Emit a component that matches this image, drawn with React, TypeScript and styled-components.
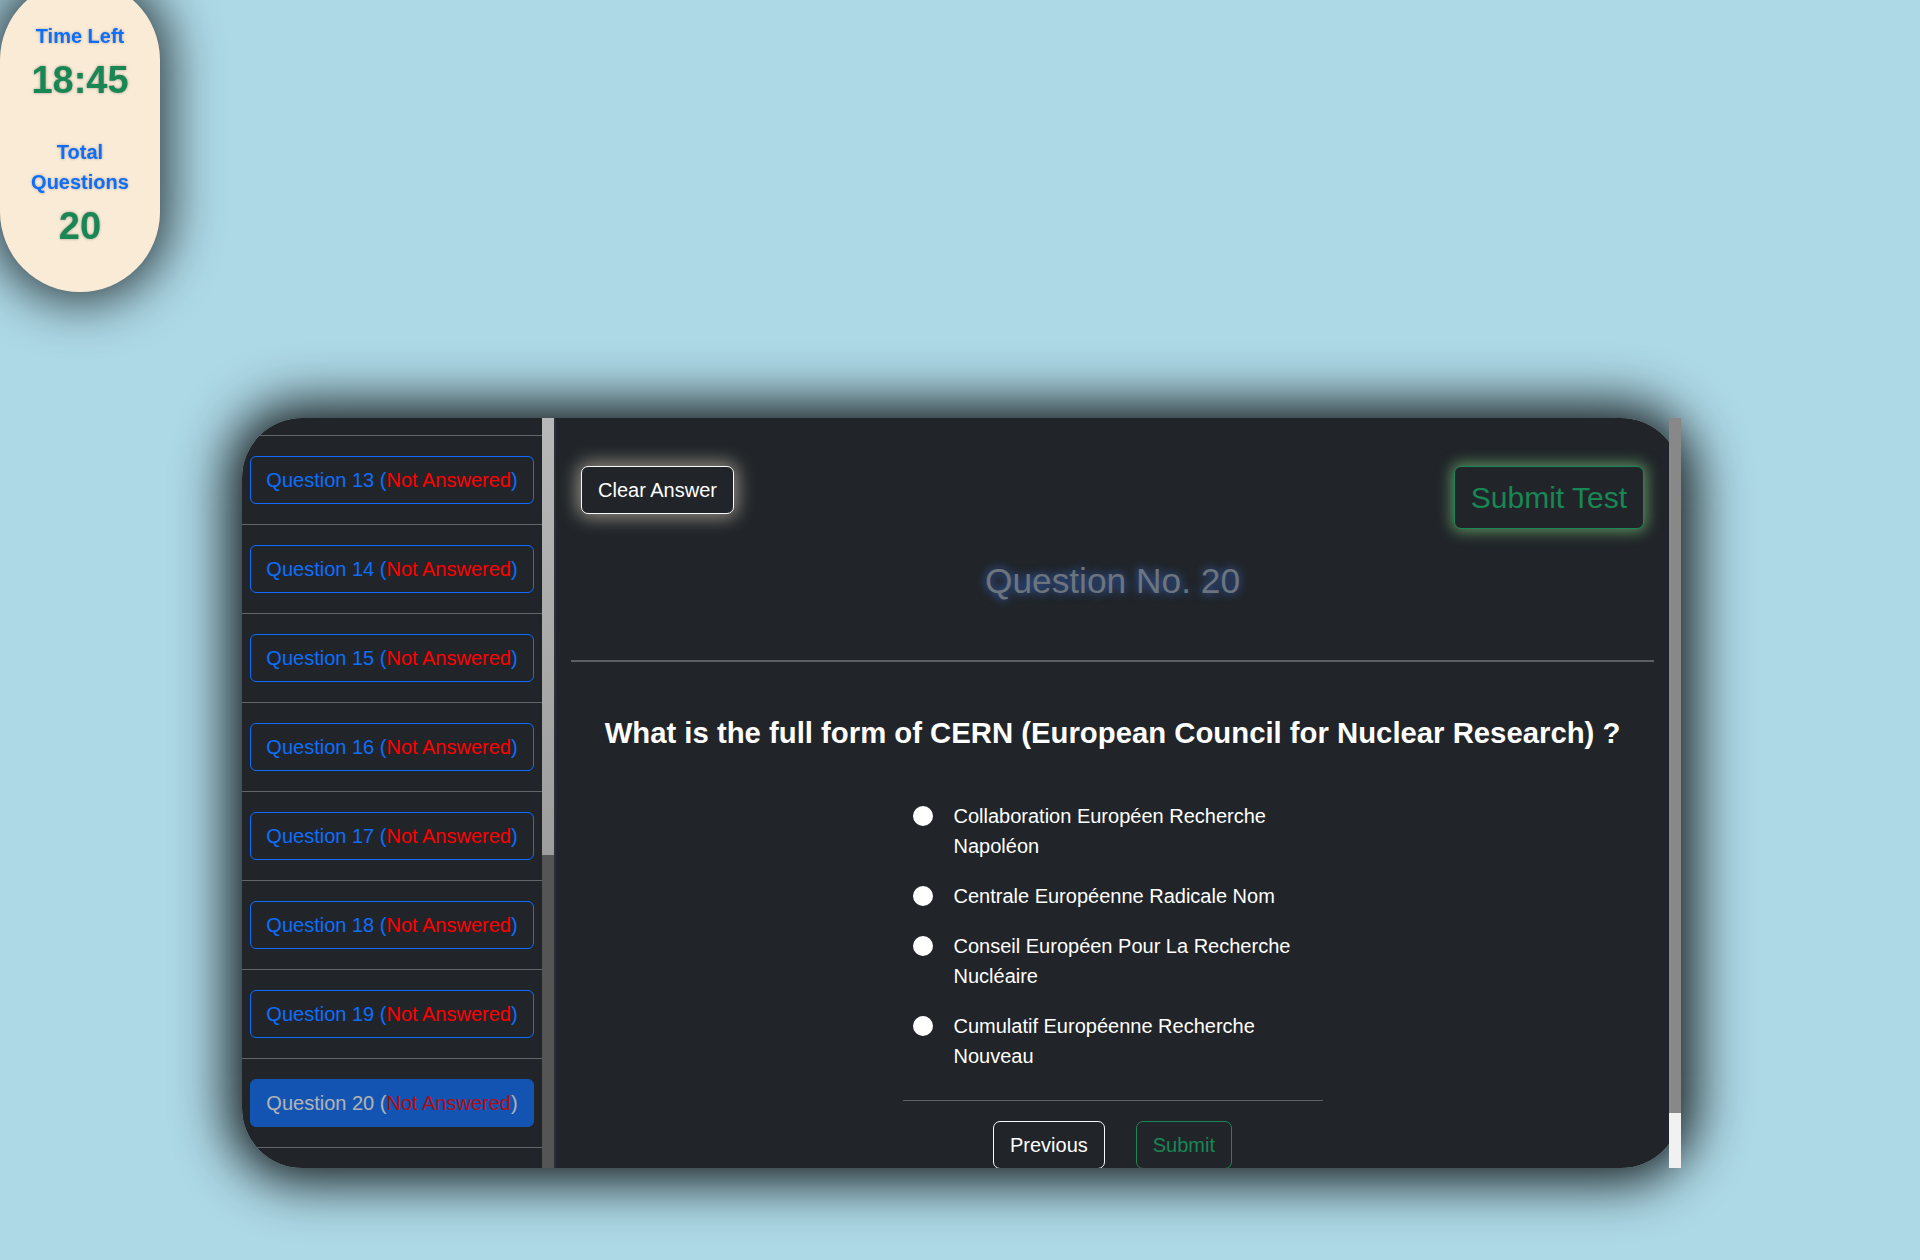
import React, { useLayoutEffect, useRef } from "react";
import styled, { createGlobalStyle } from "styled-components";

const FONT = `"Liberation Sans", Arial, sans-serif`;

const GlobalStyle = createGlobalStyle`
  html, body { margin: 0; padding: 0; }
  body {
    background: #add8e6;
    font-family: ${FONT};
    min-height: 100vh;
  }
  * { box-sizing: border-box; }
`;

const Page = styled.div`
  padding: 418px 0 0 3px;
  min-height: 1260px;
`;

const TimerCard = styled.aside`
  position: fixed;
  top: -20px;
  left: 0;
  width: 160px;
  height: 312px;
  border-radius: 80px;
  background: #faebd7;
  box-shadow: 0 0 50px 10px rgba(0, 0, 0, 0.72);
  display: flex;
  flex-direction: column;
  align-items: center;
  padding: 41px 20px 0;
  text-align: center;
  z-index: 2;
`;

const TimerLabel = styled.div<{ $gap?: number }>`
  color: #0d6efd;
  font-weight: 700;
  font-size: 20px;
  line-height: 30px;
  margin-top: ${(p) => p.$gap ?? 0}px;
  text-shadow: 0 0 3px rgba(0, 0, 0, 0.3);
`;

const TimerValue = styled.div`
  color: #198754;
  font-weight: 700;
  font-size: 38px;
  line-height: 45.6px;
  margin-top: 7px;
  text-shadow: 0 0 3px rgba(0, 0, 0, 0.35);
`;

const Panel = styled.main`
  width: 1439px;
  height: 750px;
  margin: 0 auto;
  display: flex;
  border-radius: 60px;
  box-shadow: 0 0 52px 14px rgba(0, 0, 0, 0.88);
`;

const Sidebar = styled.nav`
  flex: 0 0 312px;
  display: flex;
  background: #212529;
  border-radius: 60px 0 0 60px;
`;

const SideScroll = styled.div`
  flex: 1;
  min-width: 0;
  overflow-y: auto;
  border-radius: 60px 0 0 60px;
  padding-bottom: 20px;
  scrollbar-width: none;
  &::-webkit-scrollbar {
    display: none;
  }
`;

const Track = styled.div<{ $bg: string; $end?: boolean; $overlay?: boolean }>`
  flex: 0 0 12px;
  width: 12px;
  display: flex;
  flex-direction: column;
  justify-content: ${(p) => (p.$end ? "flex-end" : "flex-start")};
  background: ${(p) => p.$bg};
  ${(p) =>
    p.$overlay
      ? `position: absolute; top: 0; right: 0; bottom: 0;`
      : ""}
`;

const Thumb = styled.div<{ $color: string; $fraction: number }>`
  height: ${(p) => p.$fraction * 100}%;
  background: ${(p) => p.$color};
`;

const QuestionList = styled.ul`
  list-style: none;
  margin: 0;
  padding: 0;
`;

const QuestionItem = styled.li`
  padding: 20px 8px;
  border-bottom: 1px solid #626468;
`;

const QButton = styled.button<{ $active?: boolean }>`
  display: block;
  width: 100%;
  font-family: ${FONT};
  font-size: 20px;
  line-height: 30px;
  padding: 8px 14px;
  border-radius: 6px;
  border: 1px solid #0d6efd;
  background: ${(p) => (p.$active ? "#0d6efd" : "transparent")};
  color: ${(p) => (p.$active ? "#ffffff" : "#0d6efd")};
  opacity: ${(p) => (p.$active ? 0.65 : 1)};
  white-space: nowrap;
  cursor: pointer;
`;

const NotAnswered = styled.span`
  color: #ff0000;
`;

const ContentWrap = styled.section`
  position: relative;
  flex: 1;
  min-width: 0;
  background: #212529;
  border-left: 2px solid #2b3035;
  border-radius: 0 60px 60px 0;
`;

const ContentScroll = styled.div`
  height: 100%;
  overflow-y: auto;
  border-radius: 0 60px 60px 0;
  padding: 48px 27px 60px 15px;
  color: #ffffff;
  scrollbar-width: none;
  &::-webkit-scrollbar {
    display: none;
  }
`;

const TopBar = styled.div`
  display: flex;
  justify-content: space-between;
  align-items: flex-start;
  padding: 0 10px;
`;

const OutlineButton = styled.button<{
  $tone: "light" | "success";
  $size: "md" | "lg";
  $glow?: boolean;
}>`
  font-family: ${FONT};
  font-size: ${(p) => (p.$size === "lg" ? 30 : 20)}px;
  line-height: 1.5;
  padding: 8px 16px;
  border-radius: 7px;
  background: #212529;
  border: 1px solid ${(p) => (p.$tone === "light" ? "#f8f9fa" : "#198754")};
  color: ${(p) => (p.$tone === "light" ? "#ffffff" : "#198754")};
  box-shadow: ${(p) =>
    !p.$glow
      ? "none"
      : p.$tone === "light"
      ? "0 0 18px 3px rgba(250, 235, 215, 0.55)"
      : "0 0 14px 3px rgba(144, 238, 144, 0.5)"};
  cursor: pointer;
`;

const QuestionNo = styled.h2`
  margin: 31px 0 0;
  font-size: 35.3px;
  line-height: 1.2;
  font-weight: 400;
  text-align: center;
  color: #6c757d;
  text-shadow: 0 0 10px rgba(60, 120, 240, 0.8);
`;

const Rule = styled.hr<{ $narrow?: boolean; $gap: number }>`
  border: 0;
  border-top: ${(p) => (p.$narrow ? 1 : 2)}px solid #5c5f63;
  margin: ${(p) => p.$gap}px auto 0;
  width: ${(p) => (p.$narrow ? "420px" : "100%")};
`;

const QuestionText = styled.h3`
  margin: 53px 0 0;
  font-size: 29.3px;
  line-height: 1.2;
  font-weight: 700;
  text-align: center;
  color: #ffffff;
`;

const Options = styled.div`
  width: 420px;
  margin: 50px auto 0;
  padding-left: 10px;
  display: flex;
  flex-direction: column;
  gap: 20px;
`;

const Option = styled.label`
  display: flex;
  align-items: flex-start;
  gap: 21px;
  cursor: pointer;
`;

const Radio = styled.input`
  appearance: none;
  -webkit-appearance: none;
  flex: 0 0 20px;
  width: 20px;
  height: 20px;
  margin: 5px 0 0;
  border-radius: 50%;
  background: #ffffff;
  border: 0;
`;

const OptionText = styled.span`
  font-size: 20px;
  line-height: 30px;
  color: #ffffff;
`;

const NavRow = styled.div`
  display: flex;
  justify-content: center;
  gap: 31px;
  margin-top: 20px;
`;

const options = [
  "Collaboration Européen Recherche Napoléon",
  "Centrale Européenne Radicale Nom",
  "Conseil Européen Pour La Recherche Nucléaire",
  "Cumulatif Européenne Recherche Nouveau",
];

const questions = Array.from({ length: 20 }, (_, i) => i + 1);

export default function App() {
  const listRef = useRef<HTMLDivElement>(null);

  useLayoutEffect(() => {
    const el = listRef.current;
    if (el) el.scrollTop = el.scrollHeight;
  }, []);

  return (
    <>
      <GlobalStyle />
      <TimerCard>
        <TimerLabel>Time Left</TimerLabel>
        <TimerValue>18:45</TimerValue>
        <TimerLabel $gap={33}>Total Questions</TimerLabel>
        <TimerValue>20</TimerValue>
      </TimerCard>
      <Page>
        <Panel>
          <Sidebar>
            <SideScroll ref={listRef}>
              <QuestionList>
                {questions.map((n) => (
                  <QuestionItem key={n}>
                    <QButton $active={n === 20}>
                      Question {n} (<NotAnswered>Not Answered</NotAnswered>)
                    </QButton>
                  </QuestionItem>
                ))}
              </QuestionList>
            </SideScroll>
            <Track $bg="linear-gradient(180deg, #b8b8b8 0%, #8a8a8a 100%)" $end>
              <Thumb $color="#555555" $fraction={0.417} />
            </Track>
          </Sidebar>
          <ContentWrap>
            <ContentScroll>
              <TopBar>
                <OutlineButton $tone="light" $size="md" $glow>
                  Clear Answer
                </OutlineButton>
                <OutlineButton $tone="success" $size="lg" $glow>
                  Submit Test
                </OutlineButton>
              </TopBar>
              <QuestionNo>Question No. 20</QuestionNo>
              <Rule $gap={58} />
              <QuestionText>
                What is the full form of CERN (European Council for Nuclear Research) ?
              </QuestionText>
              <Options>
                {options.map((o) => (
                  <Option key={o}>
                    <Radio type="radio" name="answer" />
                    <OptionText>{o}</OptionText>
                  </Option>
                ))}
              </Options>
              <Rule $narrow $gap={29} />
              <NavRow>
                <OutlineButton $tone="light" $size="md">
                  Previous
                </OutlineButton>
                <OutlineButton $tone="success" $size="md">
                  Submit
                </OutlineButton>
              </NavRow>
            </ContentScroll>
            <Track $bg="#f1f1f1" $overlay>
              <Thumb $color="#888888" $fraction={0.927} />
            </Track>
          </ContentWrap>
        </Panel>
      </Page>
    </>
  );
}
